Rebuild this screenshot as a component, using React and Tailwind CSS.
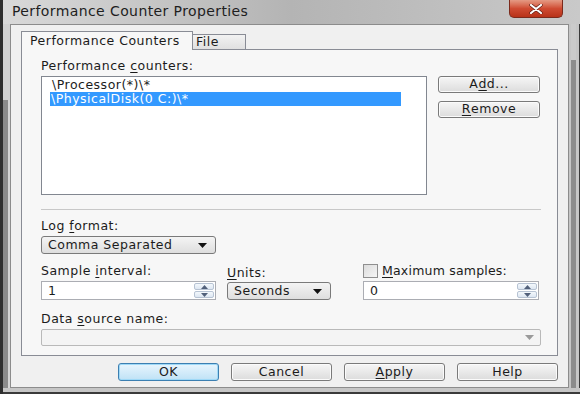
import React from 'react';

const font = { fontFamily: '"DejaVu Sans", Verdana, sans-serif' };

function U({ children }) {
  return <span className="underline underline-offset-2">{children}</span>;
}

function Arrow({ color = '#111' }) {
  return (
    <svg width="9" height="5" viewBox="0 0 9 5">
      <path d="M0 0 H9 L4.5 5 Z" fill={color} />
    </svg>
  );
}

function Spinner() {
  return (
    <div className="flex flex-col w-[22px] h-full gap-px p-px">
      <div className="flex-1 flex items-center justify-center rounded-[2px] border border-[#b7c3d3] bg-gradient-to-b from-[#f4f8fc] to-[#dde7f2]">
        <svg width="7" height="4" viewBox="0 0 7 4"><path d="M0 4 L3.5 0 L7 4 Z" fill="#51607a" /></svg>
      </div>
      <div className="flex-1 flex items-center justify-center rounded-[2px] border border-[#b7c3d3] bg-gradient-to-b from-[#f4f8fc] to-[#dde7f2]">
        <svg width="7" height="4" viewBox="0 0 7 4"><path d="M0 0 L7 0 L3.5 4 Z" fill="#51607a" /></svg>
      </div>
    </div>
  );
}

function Button({ children, primary, className = '' }) {
  return (
    <div
      className={
        'flex items-center justify-center rounded-[3px] border ' +
        (primary
          ? 'border-[#3c7fb1] bg-gradient-to-b from-[#e8f5fd] to-[#bfe2f6] shadow-[inset_0_0_0_1px_#9fd9f7] '
          : 'border-[#7a7a7a] bg-gradient-to-b from-[#f6f6f6] to-[#dcdcdc] shadow-[inset_0_0_0_1px_#fbfbfb] ') +
        className
      }
    >
      {children}
    </div>
  );
}

function Combo({ children, className = '' }) {
  return (
    <div className={'flex items-center justify-between rounded-[3px] border border-[#7a7a7a] bg-gradient-to-b from-[#f4f4f4] to-[#dedede] pl-[6px] pr-[8px] ' + className}>
      <span>{children}</span>
      <Arrow />
    </div>
  );
}

export default function App() {
  return (
    <div className="w-[580px] h-[394px] flex flex-col bg-[#c6c6c6] border-l-[3px] border-[#2e2e2e] overflow-hidden text-[#1b1b1b] text-[12.5px] tracking-[0.5px]" style={font}>
      {/* Title bar */}
      <div className="h-[24px] flex items-start bg-gradient-to-r from-[#d9d9d9] via-[#b4b4b4] to-[#c9c9c9] shrink-0">
        <div className="pl-[9px] pt-[3px] text-[14px] leading-[17px] text-[#1e1e1e] tracking-[0.4px]">Performance Counter Properties</div>
        <div className="flex-1" />
        <div className="mr-[17px] w-[54px] h-[18px] flex items-center justify-center rounded-b-[5px] border border-t-0 border-[#7b2a1c] bg-gradient-to-b from-[#e49a84] via-[#cf4b32] to-[#b83218]">
          <svg width="16" height="10" viewBox="0 0 16 10">
            <path d="M3 1 L13 9 M13 1 L3 9" stroke="#5b1a10" strokeWidth="3.4" strokeLinecap="round" />
            <path d="M3 1 L13 9 M13 1 L3 9" stroke="#ffffff" strokeWidth="2.2" strokeLinecap="round" />
          </svg>
        </div>
      </div>

      <div className="flex flex-1">
        {/* left frame */}
        <div className="w-[7px] flex flex-col">
          <div className="h-[76px] bg-[#d2d2d2]" />
          <div className="flex-1 bg-[#8a8a8a] border-r-2 border-[#d4d4d4]" />
        </div>

        {/* client */}
        <div className="w-[559px] h-[364px] flex flex-col border border-[#8c8c8c] bg-[#f0f0f0]">
          {/* tabs */}
          <div className="flex items-end pl-[10px] mt-[6px] h-[18px]">
            <div className="relative z-10 w-[172px] h-[19px] -mb-px flex items-center pl-[8px] bg-[#f7f7f7] border border-b-0 border-[#898c95]">
              Performance Counters
            </div>
            <div className="w-[53px] h-[15px] flex items-center pl-[3px] bg-gradient-to-b from-[#f2f2f2] to-[#e0e0e0] border border-b-0 border-l-0 border-[#898c95]">
              File
            </div>
          </div>

          {/* tab panel */}
          <div className="ml-[10px] w-[537px] h-[307px] border border-[#898c95] bg-[#f7f7f7] flex flex-col pl-[19px]">
            <div className="mt-[9px] h-[14px] leading-[14px]">Performance <U>c</U>ounters:</div>
            <div className="mt-[3px] flex">
              <div className="w-[386px] h-[119px] border border-[#828790] bg-white pt-px pl-[8px] flex flex-col">
                <div className="h-[14px] leading-[14px] pl-[2px]">\Processor(*)\*</div>
                <div className="w-[351px] h-[14px] leading-[14px] pl-px bg-[#3399ff] text-white">\PhysicalDisk(0 C:)\*</div>
              </div>
              <div className="ml-[11px] flex flex-col gap-[8px]">
                <Button className="w-[102px] h-[17px]">A<U>d</U>d...</Button>
                <Button className="w-[102px] h-[17px]"><U>R</U>emove</Button>
              </div>
            </div>

            <div className="mt-[14px] w-[500px] h-px bg-[#c8c8c8]" />

            <div className="mt-[9px] h-[14px] leading-[14px]">Log <U>f</U>ormat:</div>
            <Combo className="mt-[3px] w-[175px] h-[18px]">Comma Separated</Combo>

            <div className="mt-[10px] flex">
              <div className="w-[175px] flex flex-col">
                <div className="h-[14px] leading-[14px]">Sample <U>i</U>nterval:</div>
                <div className="mt-[3px] h-[19px] flex border border-[#abadb3] bg-white">
                  <div className="flex-1 pl-[6px] leading-[17px]">1</div>
                  <Spinner />
                </div>
              </div>
              <div className="ml-[11px] w-[104px] flex flex-col">
                <div className="mt-[2px] h-[14px] leading-[14px]"><U>U</U>nits:</div>
                <Combo className="mt-[2px] h-[18px]">Seconds</Combo>
              </div>
              <div className="ml-[32px] w-[176px] flex flex-col">
                <div className="h-[14px] flex items-center gap-[4px]">
                  <div className="w-[15px] h-[14px] border border-[#8f8f8f] bg-gradient-to-br from-[#dcdcdc] to-[#f6f6f6]" />
                  <span className="leading-[14px] tracking-[0.2px]"><U>M</U>aximum samples:</span>
                </div>
                <div className="mt-[3px] h-[19px] flex border border-[#abadb3] bg-white">
                  <div className="flex-1 pl-[6px] leading-[17px]">0</div>
                  <Spinner />
                </div>
              </div>
            </div>

            <div className="mt-[12px] h-[14px] leading-[14px]">Data <U>s</U>ource name:</div>
            <div className="mt-[3px] w-[500px] h-[17px] flex items-center justify-end pr-[6px] rounded-[2px] border border-[#b9b9b9] bg-[#f4f4f4]">
              <Arrow color="#9a9a9a" />
            </div>
          </div>

          {/* bottom buttons */}
          <div className="mt-[7px] flex justify-end gap-[12px] pr-[10px]">
            <Button primary className="w-[101px] h-[18px]">OK</Button>
            <Button className="w-[101px] h-[18px]">Cancel</Button>
            <Button className="w-[101px] h-[18px]"><U>A</U>pply</Button>
            <Button className="w-[101px] h-[18px]">Help</Button>
          </div>
        </div>

        {/* right frame */}
        <div className="flex-1 flex pl-[2px] pr-[3px] border-r border-[#3a3a3a]">
          <div className="flex-1 flex flex-col">
            <div className="h-[36px] bg-[#cbcbcb]" />
            <div className="flex-1 bg-[#8c8c8c]" />
          </div>
        </div>
      </div>
      <div className="h-[6px] shrink-0 bg-[#c6c6c6] border-b-2 border-[#3a3a3a]" />
    </div>
  );
}
